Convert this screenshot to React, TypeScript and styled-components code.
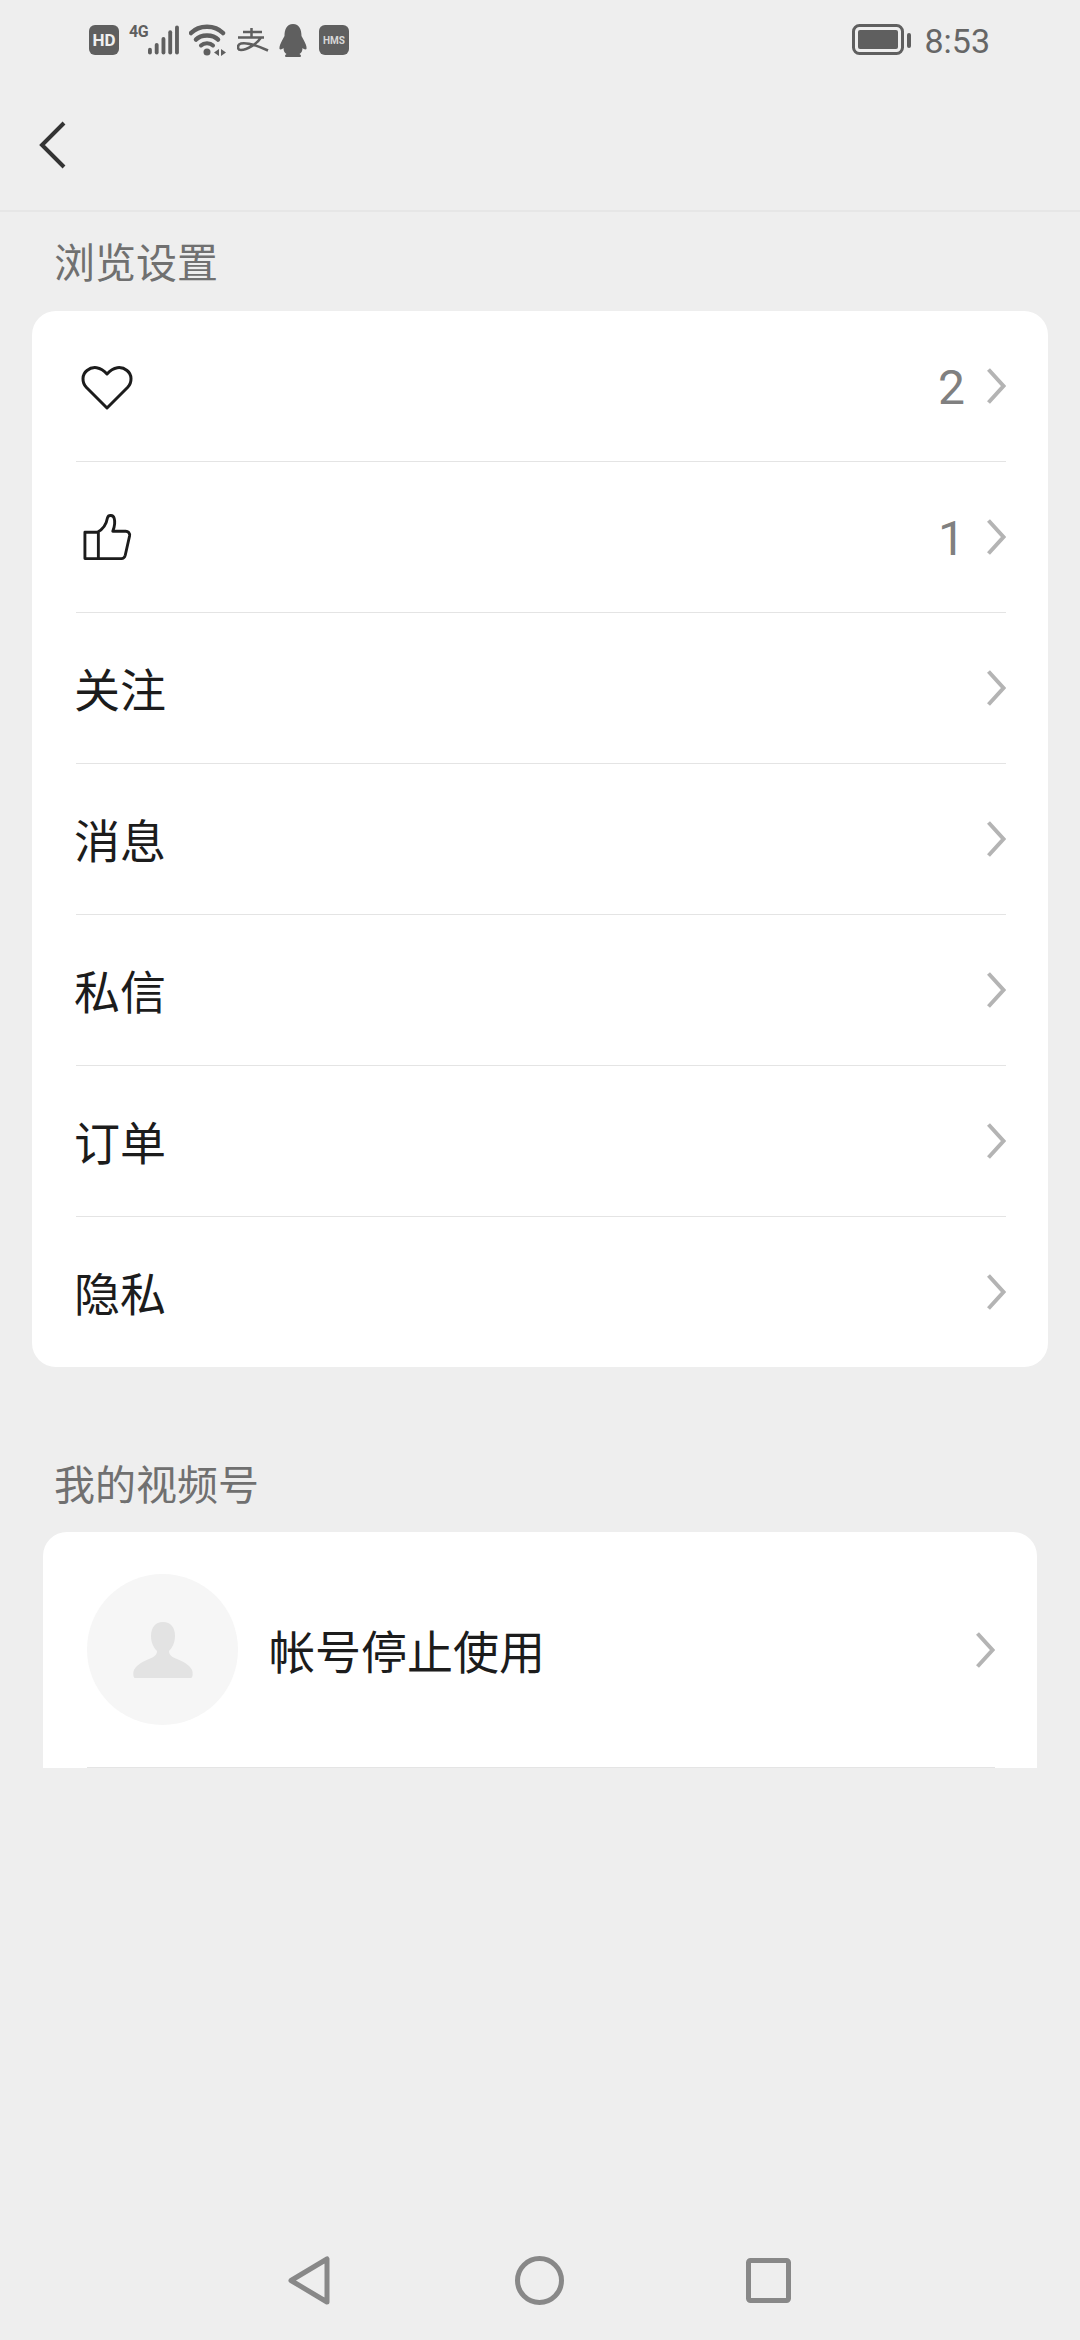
import React from "react";
import styled, { createGlobalStyle } from "styled-components";

const GlobalStyle = createGlobalStyle`
  html, body {
    margin: 0;
    padding: 0;
    background: #eeeeee;
  }
  * {
    box-sizing: border-box;
  }
`;

const FONT = `Roboto, "Noto Sans CJK SC", sans-serif`;

const rows = ["关注", "消息", "私信", "订单", "隐私"];

const Chevron = () => (
  <ChevronSvg viewBox="0 0 20 38" fill="none">
    <path d="M2.5 2.5 L17.5 19 L2.5 35.5" stroke="#b4b4b4" strokeWidth="4" />
  </ChevronSvg>
);

const HeartIcon = () => (
  <HeartSvg viewBox="0 0 52 46" fill="none">
    <path
      d="M26 43 L5.5 22.5 C0.5 17 1 9.5 6 5.5 C11.5 1 19.5 1.5 26 9 C32.5 1.5 40.5 1 46 5.5 C51 9.5 51.5 17 46.5 22.5 Z"
      stroke="#1c1c1c"
      strokeWidth="3"
      strokeLinejoin="round"
    />
  </HeartSvg>
);

const ThumbIcon = () => (
  <RowIcon viewBox="0 0 52 50" fill="none">
    <path
      d="M3 20 H17 V47.5 H3 Z M13 47.5 H41 C43 47.5 44.5 46 45 44 L49.5 24 C50 21 48 19 45.5 19 H32 C34 14 34.5 9 33.5 5.5 C32.5 2 27.5 1.5 26.5 5 C25.5 11 22 17 16 20"
      stroke="#1c1c1c"
      strokeWidth="3"
      strokeLinejoin="round"
    />
  </RowIcon>
);

const SignalBars = () => (
  <svg width="32" height="30" viewBox="0 0 32 30" fill="#5f5f5f">
    <rect x="0" y="23" width="4" height="7" rx="2" />
    <rect x="7" y="18" width="4" height="12" rx="2" />
    <rect x="14" y="12" width="4" height="18" rx="2" />
    <rect x="21" y="5" width="4" height="25" rx="2" />
    <rect x="28" y="0" width="4" height="30" rx="2" />
  </svg>
);

const WifiIcon = () => (
  <svg width="38" height="32" viewBox="0 0 38 32" fill="none">
    <path d="M2 9 C10 0.5 26 0.5 34 9" stroke="#5f5f5f" strokeWidth="4.5" strokeLinecap="round" />
    <path d="M7 15.5 C12 10 24 10 29 15.5" stroke="#5f5f5f" strokeWidth="4.5" strokeLinecap="round" />
    <path d="M12 21.5 C15 18.5 21 18.5 24 21.5" stroke="#5f5f5f" strokeWidth="4" strokeLinecap="round" />
    <circle cx="18" cy="28" r="3.5" fill="#5f5f5f" />
    <path d="M30 25 L25 28.5 L30 32 Z M32 25 L37 28.5 L32 32 Z" fill="#5f5f5f" />
  </svg>
);

const AlipayIcon = () => (
  <svg width="32" height="24" viewBox="0 0 32 24" fill="none">
    <path
      d="M6 4 H25 M14.5 0 V9.5 M1 9.5 H27 M24 9.5 C20 16 10 22 4 22 C0 22 0 16.5 4 15.5 C10 14 20 17.5 31 22.5"
      stroke="#5f5f5f"
      strokeWidth="2.5"
    />
  </svg>
);

const QQIcon = () => (
  <svg width="28" height="33" viewBox="0 0 28 33" fill="#5f5f5f">
    <path d="M14 0 C7.5 0 5.5 6 5.5 12 C3 17 0 21 0.5 25 C1.5 26 3.5 25 4.5 24 C4.5 27 5.5 29 7.5 30 C5.5 31 5.5 33 7.5 33 H20.5 C22.5 33 22.5 31 20.5 30 C22.5 29 23.5 27 23.5 24 C24.5 25 26.5 26 27.5 25 C28 21 25 17 22.5 12 C22.5 6 20.5 0 14 0 Z" />
  </svg>
);

const BatteryIcon = () => (
  <svg width="59" height="32" viewBox="0 0 59 32" fill="none">
    <rect x="1.5" y="1.5" width="49" height="28" rx="6" stroke="#5f5f5f" strokeWidth="3" />
    <rect x="6" y="6" width="40" height="19" rx="2" fill="#5f5f5f" />
    <rect x="55" y="9" width="4" height="15" rx="2" fill="#5f5f5f" />
  </svg>
);

const PersonIcon = () => (
  <svg width="60" height="56" viewBox="0 0 60 56" fill="#e3e3e3">
    <path d="M30 0 C22 0 18 6 18 14 C18 21 21 26 24 29 C24 33 21 35 16 37 C8 40 3 44 1 48 C0 50 0 56 2 56 H58 C60 56 60 50 59 48 C57 44 52 40 44 37 C39 35 36 33 36 29 C39 26 42 21 42 14 C42 6 38 0 30 0 Z" />
  </svg>
);

export default function App() {
  return (
    <>
      <GlobalStyle />
      <Page>
        <StatusBar>
          <StatusLeft>
            <HdBadge>HD</HdBadge>
            <SignalGroup>
              <NetworkType>4G</NetworkType>
              <SignalBars />
            </SignalGroup>
            <WifiIcon />
            <AlipayIcon />
            <QQIcon />
            <HmsBadge>HMS</HmsBadge>
          </StatusLeft>
          <StatusRight>
            <BatteryIcon />
            <Clock>8:53</Clock>
          </StatusRight>
        </StatusBar>

        <Header>
          <svg width="28" height="48" viewBox="0 0 28 48" fill="none">
            <path d="M25 2 L3 24 L25 46" stroke="#333333" strokeWidth="4" />
          </svg>
        </Header>

        <SectionTitle>浏览设置</SectionTitle>
        <SettingsCard>
          <SettingRow>
            <HeartIcon />
            <Count>2</Count>
            <Chevron />
          </SettingRow>
          <SettingRow>
            <ThumbIcon />
            <Count>1</Count>
            <Chevron />
          </SettingRow>
          {rows.map((label) => (
            <SettingRow key={label}>
              <RowLabel>{label}</RowLabel>
              <Chevron />
            </SettingRow>
          ))}
        </SettingsCard>

        <SectionTitle $second>我的视频号</SectionTitle>
        <ChannelCard>
          <ChannelRow>
            <Avatar>
              <PersonIcon />
            </Avatar>
            <ChannelName>帐号停止使用</ChannelName>
            <Chevron />
          </ChannelRow>
        </ChannelCard>

        <NavBar>
          <svg width="42" height="49" viewBox="0 0 42 49" fill="none">
            <path d="M3 24.5 L39 3 V46 Z" stroke="#888888" strokeWidth="5" strokeLinejoin="round" />
          </svg>
          <NavCircle width="49" height="49" viewBox="0 0 49 49" fill="none">
            <circle cx="24.5" cy="24.5" r="22" stroke="#888888" strokeWidth="5" />
          </NavCircle>
          <svg width="45" height="45" viewBox="0 0 45 45" fill="none">
            <rect x="2.5" y="2.5" width="40" height="40" rx="2" stroke="#888888" strokeWidth="5" />
          </svg>
        </NavBar>
      </Page>
    </>
  );
}

const Page = styled.div`
  width: 1080px;
  height: 2340px;
  display: flex;
  flex-direction: column;
  background: #eeeeee;
  font-family: ${FONT};
  overflow: hidden;
`;

const StatusBar = styled.div`
  height: 80px;
  padding: 0 90px 0 89px;
  display: flex;
  align-items: center;
  justify-content: space-between;
`;

const StatusLeft = styled.div`
  display: flex;
  align-items: center;
  gap: 10px;
`;

const StatusRight = styled.div`
  display: flex;
  align-items: center;
  gap: 13px;
`;

const HdBadge = styled.div`
  width: 30px;
  height: 30px;
  border-radius: 6px;
  background: #5f5f5f;
  color: #f0f0f0;
  font-size: 17px;
  font-weight: 700;
  display: flex;
  align-items: center;
  justify-content: center;
`;

const HmsBadge = styled(HdBadge)`
  margin-left: 2px;
  color: #d8d8d8;
  font-size: 10px;
`;

const SignalGroup = styled.div`
  width: 50px;
  height: 30px;
  display: flex;
  justify-content: space-between;
`;

const NetworkType = styled.span`
  font-size: 16px;
  font-weight: 700;
  line-height: 14px;
  letter-spacing: -0.5px;
  color: #5f5f5f;
`;

const Clock = styled.span`
  margin-top: 2px;
  font-size: 34px;
  color: #666666;
`;

const Header = styled.div`
  height: 132px;
  padding-left: 39px;
  display: flex;
  align-items: center;
  border-bottom: 2px solid #e6e6e6;
`;

const SectionTitle = styled.div<{ $second?: boolean }>`
  height: 40px;
  margin: ${(p) => (p.$second ? "99px 0 26px 54px" : "32px 0 27px 54px")};
  font-size: 41px;
  line-height: 40px;
  color: #707070;
`;

const SettingsCard = styled.div`
  width: 1016px;
  margin-left: 32px;
  padding: 0 42px 0 44px;
  background: #ffffff;
  border-radius: 24px;
`;

const SettingRow = styled.div`
  height: 151px;
  display: flex;
  align-items: center;
  justify-content: space-between;
  border-top: 1px solid #e4e4e4;

  &:first-child {
    height: 150px;
    border-top: none;
  }
`;

const RowIcon = styled.svg`
  width: 52px;
  height: 48px;
  margin: 0 auto 0 5px;
`;

const HeartSvg = styled(RowIcon)`
  margin-top: 3px;
`;

const RowLabel = styled.span`
  margin: 0 auto 2px -2px;
  font-size: 46px;
  color: #1c1c1c;
`;

const Count = styled.span`
  margin: 2px 21px 0 0;
  font-size: 48px;
  color: #808080;
`;

const ChevronSvg = styled.svg`
  width: 20px;
  height: 38px;
  flex: none;
`;

const ChannelCard = styled.div`
  width: 994px;
  height: 236px;
  margin-left: 43px;
  padding: 0 42px 0 44px;
  background: #ffffff;
  border-radius: 24px 24px 0 0;
`;

const ChannelRow = styled.div`
  height: 236px;
  display: flex;
  align-items: center;
  border-bottom: 1px solid #e4e4e4;
`;

const Avatar = styled.div`
  width: 151px;
  height: 151px;
  margin-right: 31px;
  border-radius: 50%;
  background: #f6f6f6;
  display: flex;
  align-items: center;
  justify-content: center;
`;

const ChannelName = styled.span`
  margin: 0 auto 2px 0;
  font-size: 46px;
  color: #1c1c1c;
`;

const NavBar = styled.div`
  height: 120px;
  margin-top: auto;
  padding: 0 289px 0 288px;
  display: flex;
  align-items: center;
  justify-content: space-between;
`;

const NavCircle = styled.svg`
  margin-left: 3px;
`;
